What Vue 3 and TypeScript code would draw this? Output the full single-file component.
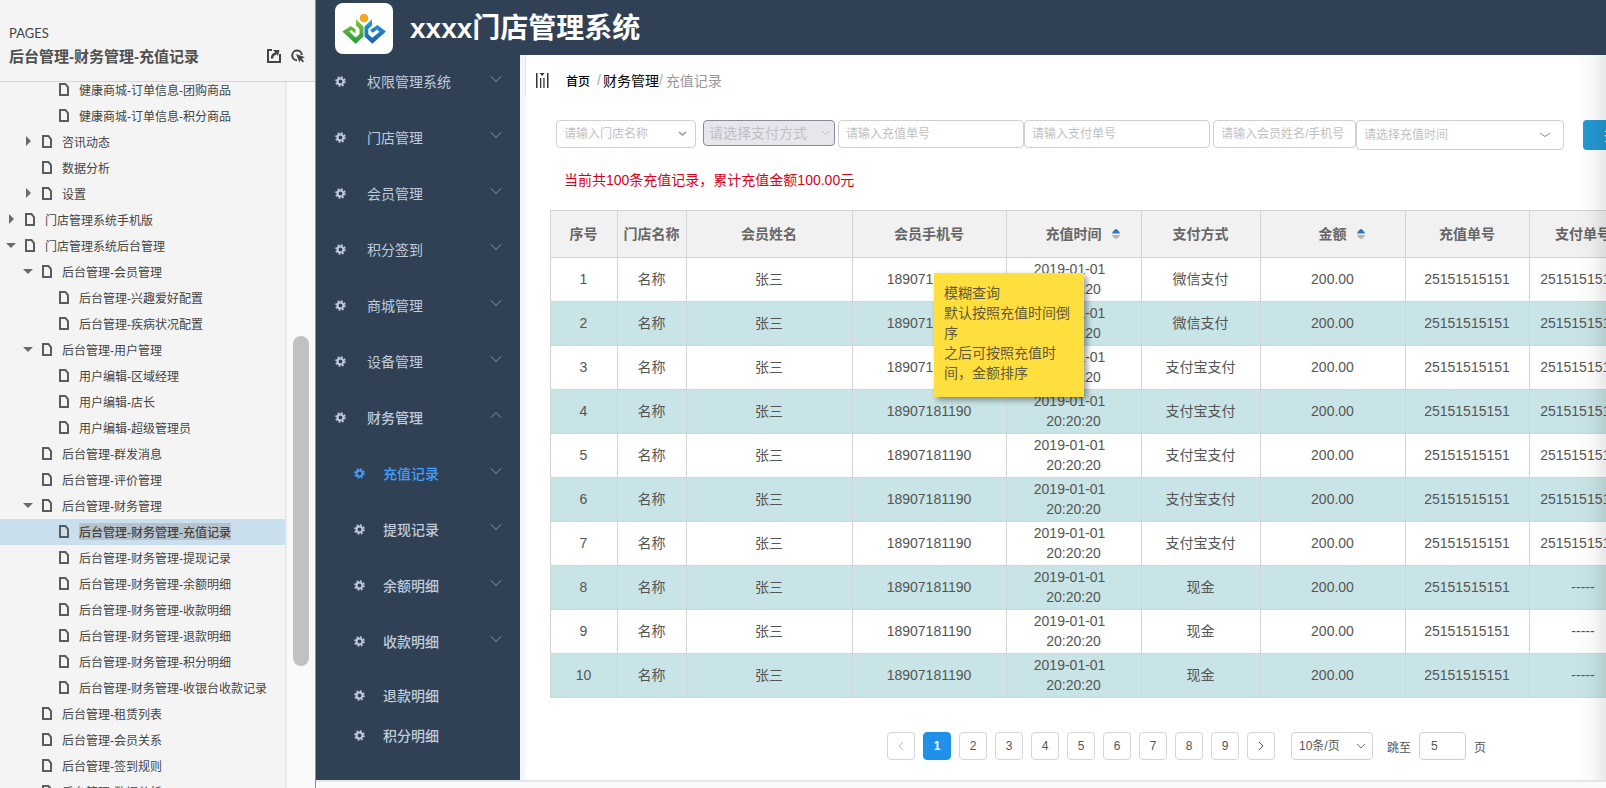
<script setup lang="ts">
import { ref } from 'vue'

interface TreeNode {
  text: string
  level: 1 | 2 | 3
  state?: 'open' | 'closed'
}
interface NavItem {
  text: string
  arrow?: 'down' | 'up'
  sub?: boolean
  compact?: boolean
}
interface Row {
  method: string
  order: string
}

const current = '后台管理-财务管理-充值记录'

const tree: TreeNode[] = [
  { text: '健康商城-订单信息-团购商品', level: 3 },
  { text: '健康商城-订单信息-积分商品', level: 3 },
  { text: '咨讯动态', level: 2, state: 'closed' },
  { text: '数据分析', level: 2 },
  { text: '设置', level: 2, state: 'closed' },
  { text: '门店管理系统手机版', level: 1, state: 'closed' },
  { text: '门店管理系统后台管理', level: 1, state: 'open' },
  { text: '后台管理-会员管理', level: 2, state: 'open' },
  { text: '后台管理-兴趣爱好配置', level: 3 },
  { text: '后台管理-疾病状况配置', level: 3 },
  { text: '后台管理-用户管理', level: 2, state: 'open' },
  { text: '用户编辑-区域经理', level: 3 },
  { text: '用户编辑-店长', level: 3 },
  { text: '用户编辑-超级管理员', level: 3 },
  { text: '后台管理-群发消息', level: 2 },
  { text: '后台管理-评价管理', level: 2 },
  { text: '后台管理-财务管理', level: 2, state: 'open' },
  { text: '后台管理-财务管理-充值记录', level: 3 },
  { text: '后台管理-财务管理-提现记录', level: 3 },
  { text: '后台管理-财务管理-余额明细', level: 3 },
  { text: '后台管理-财务管理-收款明细', level: 3 },
  { text: '后台管理-财务管理-退款明细', level: 3 },
  { text: '后台管理-财务管理-积分明细', level: 3 },
  { text: '后台管理-财务管理-收银台收款记录', level: 3 },
  { text: '后台管理-租赁列表', level: 2 },
  { text: '后台管理-会员关系', level: 2 },
  { text: '后台管理-签到规则', level: 2 },
  { text: '后台管理-数据分析', level: 2 },
]

const nav: NavItem[] = [
  { text: '权限管理系统', arrow: 'down' },
  { text: '门店管理', arrow: 'down' },
  { text: '会员管理', arrow: 'down' },
  { text: '积分签到', arrow: 'down' },
  { text: '商城管理', arrow: 'down' },
  { text: '设备管理', arrow: 'down' },
  { text: '财务管理', arrow: 'up' },
  { text: '充值记录', arrow: 'down', sub: true },
  { text: '提现记录', arrow: 'down', sub: true },
  { text: '余额明细', arrow: 'down', sub: true },
  { text: '收款明细', arrow: 'down', sub: true },
  { text: '退款明细', sub: true, compact: true },
  { text: '积分明细', sub: true, compact: true },
]

const columns = [
  { title: '序号', cls: 'c-index' },
  { title: '门店名称', cls: 'c-store' },
  { title: '会员姓名', cls: 'c-name' },
  { title: '会员手机号', cls: 'c-phone' },
  { title: '充值时间', cls: 'c-time', sort: true },
  { title: '支付方式', cls: 'c-method' },
  { title: '金额', cls: 'c-amount', sort: true },
  { title: '充值单号', cls: 'c-recharge' },
  { title: '支付单号', cls: 'c-order' },
]

const methods = ['微信支付', '微信支付', '支付宝支付', '支付宝支付', '支付宝支付', '支付宝支付', '支付宝支付', '现金', '现金', '现金']
const rows: Row[] = methods.map((method) => ({ method, order: method === '现金' ? '-----' : '25151515151' }))

const page = ref(1)
const jump = ref('5')
</script>

<template>
  <div class="shell">
    <aside class="pages">
      <header class="pages-head">
        <div class="pages-caption">PAGES</div>
        <div class="pages-row">
          <h2>{{ current }}</h2>
          <button type="button" class="icon-btn" aria-label="新窗口打开">
            <svg width="14" height="14" viewBox="0 0 14 14" fill="none" stroke="#444" stroke-width="2">
              <path d="M5 1H1v12h12V9" />
              <path d="M13 13V5" />
              <path d="M5 9.500C5 7 6.500 5 9 4.500" stroke-width="2.500" />
              <path d="M6 1h6.500L11 7z" fill="#444" stroke="none" />
            </svg>
          </button>
          <button type="button" class="icon-btn" aria-label="高亮交互">
            <svg width="15" height="15" viewBox="0 0 15 15">
              <path d="M6 11.200A4.800 4.800 0 1 1 10.800 6" fill="none" stroke="#444" stroke-width="2" />
              <path d="M5 5l9 3.300-3.300 1.400 2.300 2.500-1.200 1.200-2.400-2.400-1 2.600z" fill="#444" />
            </svg>
          </button>
        </div>
      </header>
      <div class="pages-body">
        <ul class="tree">
          <li v-for="n in tree" :key="n.text" :class="['node', 'l' + n.level, { picked: n.text === current }]">
            <button v-if="n.state" type="button" class="twist" :aria-label="n.text" :aria-expanded="n.state === 'open'">
              <svg width="10" height="10" viewBox="0 0 10 10" fill="#6b6b6b">
                <path v-if="n.state === 'open'" d="M0 3h10L5 8z" />
                <path v-else d="M3 0v10l5-5z" />
              </svg>
            </button>
            <span v-else class="twist"></span>
            <svg class="doc" width="10" height="13" viewBox="0 0 10 13" fill="none" stroke="#5c5c5c" stroke-width="2">
              <path d="M1 1h5.500L9 4v8H1z" />
            </svg>
            <a href="#">{{ n.text }}</a>
          </li>
        </ul>
        <div class="track"><div class="thumb"></div></div>
      </div>
    </aside>

    <div class="app">
      <header class="top">
        <svg class="logo" width="58" height="51" viewBox="0 0 58 51">
          <defs>
            <linearGradient id="leaf" x1="0" y1="0" x2="0" y2="1">
              <stop offset="0" stop-color="#8cc63a" />
              <stop offset="1" stop-color="#1f9a3c" />
            </linearGradient>
            <linearGradient id="sea" x1="0" y1="0" x2="0" y2="1">
              <stop offset="0" stop-color="#2f9fd8" />
              <stop offset="1" stop-color="#1a5fae" />
            </linearGradient>
          </defs>
          <rect width="58" height="51" rx="8" fill="#fff" />
          <circle cx="29" cy="15" r="4.300" fill="#f6a623" />
          <path d="M15.700 23L7.300 28.500l13.400 12.200 7.800-7.200V23.500L21 16.300v6.200l3.500 3.400v5l-3.800 3.500-6.500-6 2.300-1.500 4 3.600v-4.200z" fill="url(#leaf)" />
          <path d="M37 16.300l-7.500 7.200v10l7.800 7.200L51 28.500 42.500 22l-7.500 5 2.500 2.800 4.500-3 2.500 2-7.200 6-4-3.500v-5.400l3.700-3.400z" fill="url(#sea)" />
        </svg>
        <h1>xxxx门店管理系统</h1>
      </header>

      <div class="body">
        <nav class="menu">
          <a
            v-for="(m, i) in nav"
            :key="m.text"
            href="#"
            :class="{ sub: m.sub, compact: m.compact, active: i === 7, open: m.arrow === 'up' }"
          >
            <svg class="gear" width="11" height="11" viewBox="0 0 12 12" fill="none" stroke="currentColor">
              <circle cx="6" cy="6" r="3.200" stroke-width="2.200" />
              <circle cx="6" cy="6" r="4.900" stroke-width="1.800" stroke-dasharray="2 1.848" />
            </svg>
            <span>{{ m.text }}</span>
            <svg v-if="m.arrow" class="arrow" width="12" height="8" viewBox="0 0 12 8" fill="none" stroke="#8795a8">
              <path :d="m.arrow === 'down' ? 'M1 1.500l5 5 5-5' : 'M1 6.500l5-5 5 5'" />
            </svg>
          </a>
        </nav>

        <main class="content">
          <div class="crumbs">
            <svg width="13" height="17" viewBox="0 0 13 17" fill="#333">
              <path d="M0 1h1.500v15H0zM11 1h1.500v15H11zM4 6h1.300v10H4zM7.300 6h1.300v10H7.300zM3.500 1h5L6.300 4z" />
            </svg>
            <a href="#" class="home">首页</a>
            <i>/</i>
            <a href="#" class="section">财务管理</a>
            <i>/</i>
            <span>充值记录</span>
          </div>

          <form class="filters" @submit.prevent>
            <div class="picker store">
              <select aria-label="门店名称"><option>请输入门店名称</option></select>
              <svg width="9" height="6" viewBox="0 0 9 6" fill="none" stroke="#aaa" stroke-width="2"><path d="M1 1l3.500 3L8 1" /></svg>
            </div>
            <div class="picker pay">
              <select aria-label="支付方式" disabled><option>请选择支付方式</option></select>
              <svg width="9" height="6" viewBox="0 0 9 6" fill="none" stroke="#bbb"><path d="M1 1l3.500 3.500L8 1" /></svg>
            </div>
            <input class="wide" aria-label="充值单号" placeholder="请输入充值单号" />
            <input class="wide" aria-label="支付单号" placeholder="请输入支付单号" />
            <input class="member" aria-label="会员姓名/手机号" placeholder="请输入会员姓名/手机号" />
            <div class="picker time">
              <select aria-label="充值时间"><option>请选择充值时间</option></select>
              <svg width="10" height="6" viewBox="0 0 10 6" fill="none" stroke="#888"><path d="M0 1l5 3.500L10 1" /></svg>
            </div>
            <button type="submit" class="search">查询</button>
          </form>

          <p class="summary">当前共100条充值记录，累计充值金额100.00元</p>

          <div class="sheet">
            <table>
              <colgroup>
                <col v-for="c in columns" :key="c.cls" :class="c.cls" />
              </colgroup>
              <thead>
                <tr>
                  <th v-for="c in columns" :key="c.cls">
                    <span class="th">
                      {{ c.title }}
                      <button v-if="c.sort" type="button" class="sort" :aria-label="c.title + '排序'">
                        <svg width="10" height="12" viewBox="0 0 10 12">
                          <path d="M1 5.500C1.500 3.500 4 1 5 1s3.500 2.500 4 4.500z" fill="#2f77c4" />
                          <path d="M1 7h8c-.5 2-3 4-4 4S1.500 9 1 7z" fill="#b9b4b4" />
                        </svg>
                      </button>
                    </span>
                  </th>
                </tr>
              </thead>
              <tbody>
                <tr v-for="(r, i) in rows" :key="i">
                  <td>{{ i + 1 }}</td>
                  <td>名称</td>
                  <td>张三</td>
                  <td>18907181190</td>
                  <td>2019-01-01&nbsp;&nbsp;<br />20:20:20</td>
                  <td>{{ r.method }}</td>
                  <td>200.00</td>
                  <td>25151515151</td>
                  <td>{{ r.order }}</td>
                </tr>
              </tbody>
            </table>
            <div class="note">模糊查询<br />默认按照充值时间倒序<br />之后可按照充值时间，金额排序</div>
          </div>

          <div class="pager">
            <button type="button" aria-label="上一页" disabled>
              <svg width="6" height="10" viewBox="0 0 6 10" fill="none" stroke="#bbb"><path d="M5 1L1 5l4 4" /></svg>
            </button>
            <button v-for="p in 9" :key="p" type="button" :class="{ on: p === page }" @click="page = p">{{ p }}</button>
            <button type="button" aria-label="下一页">
              <svg width="6" height="10" viewBox="0 0 6 10" fill="none" stroke="#555"><path d="M1 1l4 4-4 4" /></svg>
            </button>
            <div class="picker size">
              <select aria-label="每页条数"><option>10条/页</option></select>
              <svg width="10" height="6" viewBox="0 0 10 6" fill="none" stroke="#777"><path d="M1 1l4 4 4-4" /></svg>
            </div>
            <label for="jump">跳至</label>
            <input id="jump" v-model="jump" />
            <span>页</span>
          </div>
          <div class="edge"></div>
        </main>
      </div>
    </div>
  </div>
</template>

<style>
body {
  margin: 0;
  background: #fafafa;
}
</style>

<style scoped>
.shell,
.shell button,
.shell input,
.shell select {
  font-family: 'Liberation Sans', 'Noto Sans CJK SC', sans-serif;
}
.shell * {
  box-sizing: border-box;
}
.shell {
  display: flex;
  height: 100vh;
  overflow: hidden;
}
a {
  color: inherit;
  text-decoration: none;
}
button {
  padding: 0;
  border: 0;
  background: none;
  cursor: pointer;
}
svg {
  display: block;
  flex: none;
}

/* page outline */
.pages {
  display: flex;
  flex-direction: column;
  flex: 0 0 316px;
  background: #f4f4f4;
  border-right: 1px solid #8d8d8d;
  color: #444;
}
.pages-head {
  flex: none;
  height: 82px;
  padding: 24px 9px 0;
  border-bottom: 1px solid #d6d6d6;
}
.pages-caption {
  font: 13px/18px Lato, sans-serif;
}
.pages-row {
  display: flex;
  align-items: center;
  gap: 10px;
  height: 28px;
}
h2 {
  flex: 1;
  margin: 0;
  padding-bottom: 2px;
  color: #505050;
  font-size: 15px;
  font-weight: 700;
}
.pages-body {
  display: flex;
  flex: 1;
  min-height: 0;
  overflow: hidden;
}
.tree {
  flex: 1;
  margin: -5px 0 0;
  padding: 0;
  list-style: none;
  font-size: 12px;
}
.node {
  display: flex;
  align-items: center;
  height: 26px;
  padding: 0 0 2px 6px;
  white-space: nowrap;
}
.l2 {
  padding-left: 23px;
}
.l3 {
  padding-left: 40px;
}
.twist {
  flex: none;
  width: 19px;
}
.doc {
  margin-right: 10px;
}
.picked {
  background: #c9dfed;
}
.picked a {
  background: #b7c3cc;
  font-weight: 500;
}
.track {
  flex: 0 0 30px;
  padding: 254px 6px 0;
  background: #fafafa;
  border-left: 2px solid #e8e8e8;
}
.thumb {
  height: 330px;
  border-radius: 8px;
  background: #c1c1c1;
}

/* application */
.app {
  flex: 1;
  min-width: 0;
}
.top {
  display: flex;
  align-items: center;
  gap: 17px;
  height: 53px;
  padding: 4px 19px 0;
  background: #304156;
}
.logo {
  position: relative;
}
h1 {
  margin: 0;
  color: #fff;
  font-size: 28px;
  line-height: 40px;
  font-weight: 700;
}
.body {
  display: flex;
  border-bottom: 2px solid #e6e6e6;
}
.menu {
  flex: 0 0 204px;
  padding-bottom: 25px;
  background: #304156;
  color: #bfcbd9;
  font-size: 14px;
}
.menu a {
  display: flex;
  align-items: center;
  gap: 21px;
  height: 56px;
  padding: 0 18px 0 19px;
}
.menu .open,
.menu .sub {
  font-weight: 500;
}
.menu .sub {
  gap: 18px;
  padding-left: 38px;
}
.menu .compact {
  height: 40px;
}
.menu a:not(.compact) + .compact {
  margin-top: 6px;
}
.menu .active {
  color: #409eff;
}
.arrow {
  margin: 0 0 4px auto;
}
.content {
  position: relative;
  flex: 1;
  min-width: 0;
  overflow: hidden;
  padding: 0 0 19px 5px;
  background: linear-gradient(90deg, #f3f6f9 5px, #fff 5px);
  border-top: 2px solid #304156;
}
.crumbs {
  display: flex;
  align-items: center;
  height: 42px;
  padding: 8px 10px 0;
  border-left: 1px solid #e3e3e3;
  font-size: 14px;
  color: #000;
}
.crumbs i {
  color: #aab;
  font-style: normal;
}
.crumbs span {
  margin-left: 3px;
  color: #999;
}
.crumbs .home {
  margin: 0 7px 0 17px;
  font-size: 12px;
  font-weight: 500;
}
.crumbs .section {
  margin-left: 2px;
}
.filters {
  display: flex;
  align-items: flex-start;
  padding: 23px 0 0 31px;
}
.filters > * {
  flex: none;
}
input,
select {
  height: 28px;
  padding: 0 7px;
  border: 1px solid #d0d0d0;
  border-radius: 4px;
  background: #fff;
  color: #bfbfbf;
  font-size: 12px;
  outline: none;
}
input::placeholder {
  color: #bfbfbf;
  opacity: 1;
}
.picker {
  position: relative;
}
.picker select {
  display: block;
  width: 100%;
  appearance: none;
  opacity: 1;
}
.picker svg {
  position: absolute;
  top: 50%;
  right: 9px;
  margin-top: -3px;
  pointer-events: none;
}
.store {
  width: 140px;
  margin-right: 7px;
}
.pay {
  width: 132px;
  margin-right: 3px;
}
.pay select {
  height: 26px;
  padding: 0 5px;
  background: #e7e6ec;
  border-color: #8b8a98;
  font-size: 14px;
}
.pay svg {
  right: 5px;
}
.wide {
  width: 186px;
}
.member {
  width: 143px;
  margin-left: 3px;
}
.time {
  width: 208px;
  margin-right: 19px;
}
.time select {
  height: 30px;
}
.time svg {
  right: 14px;
}
.search {
  width: 70px;
  height: 30px;
  border-radius: 4px;
  background: #2399d1;
  color: #fff;
  font-size: 14px;
}
.summary {
  margin: 20px 0 20px 39px;
  color: #d9001b;
  font-size: 14px;
  line-height: 20px;
}
.sheet {
  position: relative;
  padding-left: 25px;
}
table {
  width: 1088px;
  table-layout: fixed;
  border-collapse: collapse;
  color: #555;
  font-size: 14px;
  line-height: 20px;
  text-align: center;
}
.c-index {
  width: 67px;
}
.c-store {
  width: 69px;
}
.c-name {
  width: 166px;
}
.c-phone {
  width: 154px;
}
.c-time {
  width: 135px;
}
.c-method {
  width: 119px;
}
.c-amount {
  width: 145px;
}
.c-recharge {
  width: 124px;
}
th,
td {
  height: 44px;
  padding: 0 1px 2px 0;
  border: 1px solid #d4d4d4;
}
th {
  height: 47px;
  padding-bottom: 0;
  background: #f1f1f1;
  color: #666;
  font-weight: 700;
}
tbody tr:nth-child(even) {
  background: #c8e4e6;
}
.th {
  position: relative;
}
.sort {
  position: absolute;
  top: 2px;
  left: 100%;
  margin-left: 9px;
}
.note {
  position: absolute;
  top: 63px;
  left: 409px;
  width: 150px;
  padding: 10px 10px 14px;
  background: #ffdf3d;
  box-shadow: 3px 3px 6px rgba(0, 0, 0, 0.4);
  color: #5f5a3c;
  font-size: 14px;
  line-height: 20px;
}
.pager {
  display: flex;
  align-items: center;
  gap: 8px;
  margin: 34px 0 0 362px;
  color: #555;
  font-size: 12px;
}
.pager > * {
  flex: none;
}
.pager button {
  display: flex;
  align-items: center;
  justify-content: center;
  width: 28px;
  height: 28px;
  border: 1px solid #d5d5d5;
  border-radius: 4px;
  color: #555;
  font-size: 12px;
}
.pager .on {
  border-color: #2190e8;
  background: #2190e8;
  color: #fff;
  font-weight: 700;
}
.pager input,
.pager select {
  color: #555;
}
.size {
  width: 82px;
  margin: 0 6px 0 8px;
}
.size svg {
  right: 7px;
}
#jump {
  width: 47px;
  padding-left: 11px;
}
.edge {
  position: absolute;
  top: 0;
  right: 0;
  bottom: 0;
  width: 32px;
  background: linear-gradient(90deg, rgba(0, 0, 0, 0), rgba(0, 0, 0, 0.02) 50%, rgba(0, 0, 0, 0.09));
  pointer-events: none;
}
</style>
